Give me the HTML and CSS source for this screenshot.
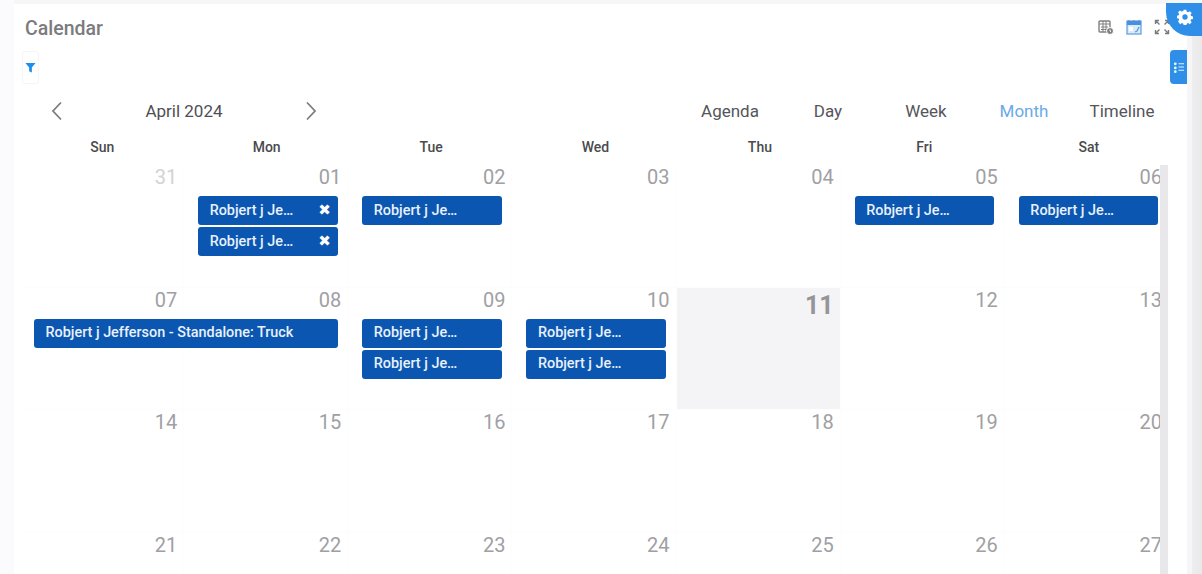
FILE: index.html
```html
<!DOCTYPE html>
<html lang="en">
<head>
<meta charset="utf-8">
<title>Calendar</title>
<link rel="stylesheet" href="styles.css">
</head>
<body>
<div class="page">
  <div class="top-strip"></div>
  <header class="head">
    <h1 class="title">Calendar</h1>
    <div class="head-icons">
      <svg class="hi" viewBox="0 0 16 16" width="16" height="16"><rect x="1" y="2" width="11" height="11" rx="1" fill="none" stroke="#808080" stroke-width="1.4"/><path d="M1 5h11M3 8h7M3 10.500h7M5 2v11M8 2v11" stroke="#808080" stroke-width="1"/><circle cx="12" cy="12" r="3.500" fill="#808080" stroke="#fff"/><path d="M12 10.500v1.500l1 .8" stroke="#fff" fill="none"/></svg>
      <svg class="hi" viewBox="0 0 16 16" width="16" height="16"><rect x="1" y="2" width="14" height="13" fill="#dcebfa" stroke="#5a9be0" stroke-width="1.200"/><rect x="1" y="2" width="14" height="4" fill="#4a8fdc"/><path d="M3 1v2M8 1v2M13 1v2" stroke="#4a8fdc"/><rect x="3" y="8" width="4" height="4" fill="#fff"/><path d="M9 13l2-1 2-4" stroke="#5a9be0" stroke-width="1.300" fill="none"/></svg>
      <svg class="hi" viewBox="0 0 16 16" width="16" height="16"><path d="M1.500 5V1.500H5M11 1.500h3.500V5M14.500 11v3.500H11M5 14.500H1.500V11M2 2l3.500 3.500M14 2l-3.500 3.500M14 14l-3.500-3.500M2 14l3.500-3.500" fill="none" stroke="#7a7a7a" stroke-width="1.400"/></svg>
    </div>
  </header>
  <div class="filter-row">
    <button class="filter" type="button"><svg viewBox="0 0 12 12" width="11" height="11"><path d="M.5 1h11L7.500 6v5.500l-3-1.500V6z" fill="#1f8fee"/></svg></button>
  </div>
  <div class="toolbar">
    <div class="nav">
      <svg class="chev" viewBox="0 0 12 20" width="12" height="20"><path d="M10 1.500 2 10l8 8.500" fill="none" stroke="#7d7d7d" stroke-width="1.800"/></svg>
      <span class="month-name">April 2024</span>
      <svg class="chev" viewBox="0 0 12 20" width="12" height="20"><path d="M2 1.500 10 10l-8 8.500" fill="none" stroke="#7d7d7d" stroke-width="1.800"/></svg>
    </div>
    <div class="views">
      <span class="view">Agenda</span>
      <span class="view">Day</span>
      <span class="view">Week</span>
      <span class="view active">Month</span>
      <span class="view">Timeline</span>
    </div>
  </div>
  <div class="weekdays">
    <span>Sun</span><span>Mon</span><span>Tue</span><span>Wed</span><span>Thu</span><span>Fri</span><span>Sat</span>
  </div>
  <main class="weeks">
    <section class="week">
      <div class="day c1"><span class="num faded">31</span></div>
      <div class="day c2"><span class="num">01</span></div>
      <div class="day c3"><span class="num">02</span></div>
      <div class="day c4"><span class="num">03</span></div>
      <div class="day c5"><span class="num">04</span></div>
      <div class="day c6"><span class="num">05</span></div>
      <div class="day c7"><span class="num">06</span></div>
      <div class="event c2 r2"><span class="ev-text">Robjert j Je…</span><span class="x">✖</span></div>
      <div class="event c2 r3"><span class="ev-text">Robjert j Je…</span><span class="x">✖</span></div>
      <div class="event c3 r2"><span class="ev-text">Robjert j Je…</span></div>
      <div class="event c6 r2"><span class="ev-text">Robjert j Je…</span></div>
      <div class="event c7 r2"><span class="ev-text">Robjert j Je…</span></div>
    </section>
    <section class="week">
      <div class="day c1"><span class="num">07</span></div>
      <div class="day c2"><span class="num">08</span></div>
      <div class="day c3"><span class="num">09</span></div>
      <div class="day c4"><span class="num">10</span></div>
      <div class="day c5 today"><span class="num">11</span></div>
      <div class="day c6"><span class="num">12</span></div>
      <div class="day c7"><span class="num">13</span></div>
      <div class="event c1 span2 r2"><span class="ev-text">Robjert j Jefferson - Standalone: Truck</span></div>
      <div class="event c3 r2"><span class="ev-text">Robjert j Je…</span></div>
      <div class="event c3 r3"><span class="ev-text">Robjert j Je…</span></div>
      <div class="event c4 r2"><span class="ev-text">Robjert j Je…</span></div>
      <div class="event c4 r3"><span class="ev-text">Robjert j Je…</span></div>
    </section>
    <section class="week">
      <div class="day c1"><span class="num">14</span></div>
      <div class="day c2"><span class="num">15</span></div>
      <div class="day c3"><span class="num">16</span></div>
      <div class="day c4"><span class="num">17</span></div>
      <div class="day c5"><span class="num">18</span></div>
      <div class="day c6"><span class="num">19</span></div>
      <div class="day c7"><span class="num">20</span></div>
    </section>
    <section class="week">
      <div class="day c1"><span class="num">21</span></div>
      <div class="day c2"><span class="num">22</span></div>
      <div class="day c3"><span class="num">23</span></div>
      <div class="day c4"><span class="num">24</span></div>
      <div class="day c5"><span class="num">25</span></div>
      <div class="day c6"><span class="num">26</span></div>
      <div class="day c7"><span class="num">27</span></div>
    </section>
  </main>
  <div class="scroll-inner"></div>
  <div class="scroll-outer"></div>
  <div class="settings-tab">
    <svg viewBox="0 0 24 24" width="16" height="16"><path fill="#fff" fill-rule="evenodd" d="M10 1h4l.6 3 2 .9 2.600-1.700 2.800 2.800-1.700 2.600.9 2 3 .6v3.600l-3 .6-.9 2 1.700 2.600-2.800 2.800-2.600-1.700-2 .9-.6 3h-4l-.6-3-2-.9-2.600 1.700L1.600 18.900l1.700-2.600-.9-2-3-.6v-3.600l3-.6.9-2L1.600 5l2.800-2.800L7 3.900l2.400-.9zM12 8a4 4 0 1 0 0 8 4 4 0 0 0 0-8z"/></svg>
  </div>
  <div class="side-tab">
    <svg viewBox="0 0 12 14" width="11" height="13"><circle cx="2.500" cy="3" r="1.500" fill="#dff" /><circle cx="2.500" cy="7.500" r="1.500" fill="#dff"/><circle cx="2.500" cy="11.500" r="1.500" fill="#dff"/><path d="M6 3h6M6 6.500h6M6 10h6" stroke="#e6f2ff" stroke-width="1.100"/></svg>
  </div>
</div>
</body>
</html>
```
FILE: styles.css
```css
* { box-sizing: border-box; }
html, body { margin: 0; padding: 0; }
body { font-family: Roboto, "Liberation Sans", sans-serif; background: #fff; }

.page {
  position: relative;
  width: 1202px;
  height: 574px;
  overflow: hidden;
  background: #fff;
  padding-left: 20px;
}
.page::before {
  content: "";
  position: absolute;
  left: 0; top: 0; bottom: 0;
  width: 14px;
  background: #fbfbfd;
}
.top-strip {
  height: 4px;
  margin-left: -6px;
  background: #f6f6f7;
}
.head {
  display: flex;
  align-items: center;
  justify-content: space-between;
  height: 47px;
  padding: 2px 32px 0 5px;
}
.title {
  margin: 0;
  font-size: 19.5px;
  font-weight: 500;
  color: #7b7b7d;
}
.head-icons {
  display: flex;
  gap: 12px;
  margin-top: -4px;
}
.hi { display: block; }

.filter-row { height: 34px; padding-left: 2px; }
.filter {
  display: flex;
  align-items: center;
  justify-content: center;
  width: 17px;
  height: 33px;
  padding: 0;
  background: #fff;
  border: 1px solid #f5f5f7;
  border-radius: 3px;
}

.toolbar {
  display: flex;
  align-items: center;
  height: 50px;
  padding-top: 2px;
}
.nav {
  display: flex;
  align-items: center;
  width: 661px;
  padding-left: 31px;
}
.chev { display: block; }
.month-name {
  width: 242px;
  text-align: center;
  font-size: 17px;
  color: #4f4f55;
}
.views { display: flex; }
.view {
  width: 98px;
  text-align: center;
  font-size: 17px;
  color: #55555b;
}
.view.active { color: #6aa9ea; }

.weekdays {
  display: grid;
  grid-template-columns: repeat(7, 1fr);
  width: 1151px;
  height: 30px;
  line-height: 25px;
  text-align: center;
  font-size: 14px;
  font-weight: 500;
  color: #4a4a4e;
}

.week {
  display: grid;
  grid-template-columns: repeat(7, 1fr);
  grid-template-rows: 31px 31px 31px 1fr;
  width: 1149px;
  height: 122.5px;
}
.day {
  grid-row: 1 / -1;
  border-right: 1px solid #fdfdfd;
  border-bottom: 1px solid #fdfdfd;
  padding-right: 6px;
  text-align: right;
}
.num {
  display: block;
  height: 24px;
  line-height: 25px;
  font-size: 20px;
  color: #a0a0a4;
}
.num.faded { color: #d2d2d5; }
.today { background: #f4f3f5; }
.today .num {
  font-size: 25px;
  font-weight: 700;
  line-height: 36px;
  color: #959599;
}

.c1 { grid-column: 1; }
.c2 { grid-column: 2; }
.c3 { grid-column: 3; }
.c4 { grid-column: 4; }
.c5 { grid-column: 5; }
.c6 { grid-column: 6; }
.c7 { grid-column: 7; }
.span2 { grid-column: 1 / span 2; }
.r2 { grid-row: 2; }
.r3 { grid-row: 3; }

.event {
  display: flex;
  align-items: center;
  justify-content: space-between;
  height: 29px;
  margin: 0 10.5px 0 14px;
  padding: 0 7px 1px 11.5px;
  background: #0a56b1;
  border-radius: 3px;
  color: #e9f1fb;
  font-size: 14.4px;
  font-weight: 500;
  white-space: nowrap;
}
.x { color: #fff; font-size: 15px; line-height: 1; font-family: "DejaVu Sans", sans-serif; }

.scroll-inner {
  position: absolute;
  left: 1160px; top: 165px; bottom: 0;
  width: 8px;
  background: #e8e7ea;
}
.scroll-outer {
  position: absolute;
  left: 1187px; top: 36px; bottom: 0;
  width: 15px;
  background: linear-gradient(to right, #f6f6f8 0, #f6f6f8 5px, #eeeeef 5px, #e9e9ea 100%);
}
.settings-tab {
  position: absolute;
  left: 1166px; top: 3px;
  width: 36px;
  height: 33px;
  display: flex;
  align-items: center;
  justify-content: center;
  padding: 0 0 5px 2px;
  background: #2f8fe8;
  border-bottom-left-radius: 24px;
}
.side-tab {
  position: absolute;
  left: 1170px; top: 50px;
  width: 17px;
  height: 34px;
  display: flex;
  align-items: center;
  justify-content: center;
  background: #2f8fe8;
  border-radius: 4px 0 0 4px;
}
```
